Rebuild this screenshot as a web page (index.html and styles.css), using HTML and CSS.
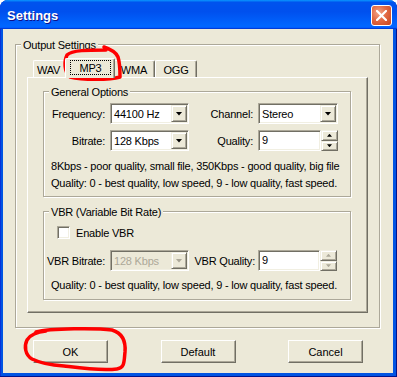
FILE: index.html
```html
<!DOCTYPE html>
<html lang="en">
<head>
    <meta charset="UTF-8">
    <title>Settings</title>
    <link rel="stylesheet" href="styles.css">
</head>
<body>
    <div class="window">
        <div class="titlebar">
            <span class="title">Settings</span>
            <button class="close" aria-label="Close">
                <svg width="11" height="11" viewBox="0 0 11 11"><path d="M1 1L10 10M10 1L1 10" stroke="#fff" stroke-width="2.2" stroke-linecap="square"/></svg>
            </button>
        </div>
        <div class="client">
            <div class="group outer">
                <span class="group-title">Output Settings</span>
                <div class="tabs">
                    <div class="tab tab-wav">WAV</div>
                    <div class="tab active"><span class="focus">MP3</span></div>
                    <div class="tab">WMA</div>
                    <div class="tab">OGG</div>
                </div>
                <div class="panel">
                    <div class="group general">
                        <span class="group-title">General Options</span>
                        <div class="row">
                            <span class="label lbl-a">Frequency:</span>
                            <div class="combo"><span>44100 Hz</span><i class="arrow"></i></div>
                            <span class="label lbl-b">Channel:</span>
                            <div class="combo wide"><span>Stereo</span><i class="arrow"></i></div>
                        </div>
                        <div class="row">
                            <span class="label lbl-a">Bitrate:</span>
                            <div class="combo"><span>128 Kbps</span><i class="arrow"></i></div>
                            <span class="label lbl-b">Quality:</span>
                            <div class="edit">9</div>
                            <div class="spin"><i class="spin-btn up"></i><i class="spin-btn down"></i></div>
                        </div>
                        <p class="note">8Kbps - poor quality, small file, 350Kbps - good quality, big file<br>Quality: 0 - best quality, low speed, 9 - low quality, fast speed.</p>
                    </div>
                    <div class="group vbr">
                        <span class="group-title">VBR (Variable Bit Rate)</span>
                        <div class="check-row">
                            <i class="checkbox"></i>
                            <span>Enable VBR</span>
                        </div>
                        <div class="row">
                            <span class="label lbl-c">VBR Bitrate:</span>
                            <div class="combo disabled"><span>128 Kbps</span><i class="arrow"></i></div>
                            <span class="label lbl-d">VBR Quality:</span>
                            <div class="edit short">9</div>
                            <div class="spin disabled"><i class="spin-btn up"></i><i class="spin-btn down"></i></div>
                        </div>
                        <p class="note">Quality: 0 - best quality, low speed, 9 - low quality, fast speed.</p>
                    </div>
                </div>
            </div>
            <div class="buttons">
                <button class="btn">OK</button>
                <button class="btn">Default</button>
                <button class="btn">Cancel</button>
            </div>
        </div>
        <!-- red hand-drawn marks over the screenshot -->
        <svg class="marks" width="397" height="377" viewBox="0 0 397 377">
            <path d="M104 47C110 49 116 52 118 57C120 63 120 71 120 77C110 80 82 80 70 77C64 72 64 61 67 55C72 50 88 50 106 50" />
            <path d="M36 332C50 328 98 328 112 330C122 333 126 340 125 352C124 361 125 368 117 369C100 371 80 368 64 366C50 365 38 362 32 359C25 355 24 346 27 340C30 335 35 332 46 331" />
        </svg>
    </div>
</body>
</html>
```

FILE: styles.css
```css
* {
    box-sizing: border-box;
}
body {
    margin: 0;
    background: #fff;
    font-family: "Liberation Sans", Arial, sans-serif;
    font-size: 11px;
    letter-spacing: -0.2px;
    color: #000;
}
.window {
    position: relative;
    width: 397px;
    height: 377px;
    display: flex;
    flex-direction: column;
    background: #0054e3;
    border-radius: 8px 8px 0 0;
    overflow: hidden;
    box-shadow: inset -1px -1px #00138c, inset 1px 0 #0831d9;
}
.titlebar {
    flex: none;
    height: 29px;
    display: flex;
    align-items: center;
    justify-content: space-between;
    padding: 2px 5px 0 7px;
    background: linear-gradient(#0997ff, #0053ee 8%, #0050ee 40%, #0066ff 88%, #0066ff 93%, #005bff 95%, #003dd7 96%, #003dd7);
}
.title {
    color: #fff;
    font-weight: bold;
    font-size: 13px;
    letter-spacing: 0;
    text-shadow: 1px 1px #0f1089;
}
.close {
    width: 21px;
    height: 21px;
    padding: 0;
    border: 1px solid #fff;
    border-radius: 3px;
    display: flex;
    align-items: center;
    justify-content: center;
    background: radial-gradient(circle at 35% 35%, #f2a589, #e26a44 45%, #c7431c);
}
.client {
    flex: 1;
    margin: 0 4px 4px 3px;
    padding: 15px 13px 10px 12px;
    background: #ece9d8;
}
.group {
    position: relative;
    border: 1px solid #aca899;
    box-shadow: inset 1px 1px #fff, 1px 1px #fff;
}
.group-title {
    position: absolute;
    top: -6px;
    left: 5px;
    padding: 0 2px;
    line-height: 13px;
    background: #ece9d8;
}
.outer {
    padding: 13px 11px 14px;
}
.tabs {
    display: flex;
    align-items: flex-end;
    height: 19px;
    padding-left: 6px;
}
.tab {
    width: 42px;
    height: 17px;
    display: flex;
    align-items: center;
    justify-content: center;
    padding-top: 1px;
    background: #ece9d8;
    border: 1px solid #fff;
    border-right-color: #716f64;
    border-bottom: 0;
    border-radius: 2px 2px 0 0;
    box-shadow: inset -1px 0 #aca899;
}
.tab-wav {
    width: 34px;
    padding-right: 3px;
}
.tab.active {
    width: 50px;
    height: 20px;
    margin: 0 -2px -1px;
    padding: 1px 3px 3px 4px;
    z-index: 1;
}
.focus {
    flex: 1;
    height: 15px;
    display: flex;
    align-items: center;
    justify-content: center;
    border: 1px dotted #000;
}
.panel {
    padding: 13px 16px 12px 15px;
    border: 1px solid;
    border-color: #fff #716f64 #716f64 #fff;
    box-shadow: inset -1px -1px #aca899;
}
.general {
    margin-bottom: 14px;
    padding: 11px 0 4px 7px;
}
.vbr {
    padding: 14px 0 5px 7px;
}
.row {
    display: flex;
    align-items: center;
    height: 21px;
}
.row + .row {
    margin-top: 6px;
}
.label {
    flex: none;
    margin-right: 5px;
    text-align: right;
    white-space: nowrap;
}
.lbl-a {
    width: 54px;
}
.lbl-b {
    width: 64px;
}
.lbl-c {
    width: 59px;
}
.lbl-d {
    width: 66px;
    margin-right: 3px;
}
.combo, .edit, .checkbox {
    flex: none;
    background: #fff;
    border: 1px solid;
    border-color: #aca899 #fff #fff #aca899;
    box-shadow: inset 1px 1px #716f64, inset -1px -1px #f1efe2;
}
.combo {
    width: 79px;
    height: 21px;
    padding: 1px;
    display: flex;
    align-items: center;
}
.combo.wide {
    width: 80px;
}
.combo span {
    flex: 1;
    padding-left: 2px;
}
.arrow, .spin-btn {
    display: flex;
    align-items: center;
    justify-content: center;
    background: #ece9d8;
    border: 1px solid;
    border-color: #f1efe2 #716f64 #716f64 #f1efe2;
    box-shadow: inset 1px 1px #fff, inset -1px -1px #aca899;
}
.arrow {
    width: 16px;
    height: 17px;
}
.arrow::after {
    content: "";
    width: 7px;
    height: 4px;
    background: #000;
    clip-path: polygon(0 0, 100% 0, 50% 100%);
}
.edit {
    width: 63px;
    height: 21px;
    padding: 2px 3px;
    line-height: 15px;
}
.edit.short {
    width: 62px;
}
.spin {
    flex: none;
    width: 17px;
    height: 21px;
    display: flex;
    flex-direction: column;
}
.spin-btn {
    flex: 1;
}
.spin-btn::after {
    content: "";
    width: 5px;
    height: 3px;
    background: #000;
}
.up::after {
    clip-path: polygon(50% 0, 100% 100%, 0 100%);
}
.down::after {
    clip-path: polygon(0 0, 100% 0, 50% 100%);
}
.disabled.combo {
    background: #ece9d8;
    color: #aca899;
}
.disabled .arrow::after, .disabled .spin-btn::after {
    background: #aca899;
}
.note {
    margin: 7px 0 0;
    line-height: 17px;
}
.vbr .note {
    margin-top: 6px;
}
.vbr .row {
    margin-top: 11px;
    margin-left: -5px;
}
.check-row {
    display: flex;
    align-items: center;
    height: 13px;
    padding-left: 6px;
}
.checkbox {
    width: 13px;
    height: 13px;
    margin-right: 6px;
}
.buttons {
    display: flex;
    justify-content: space-between;
    margin-top: 12px;
    padding: 0 17px 0 18px;
}
.btn {
    width: 75px;
    height: 23px;
    padding: 0;
    font: inherit;
    color: #000;
    background: #ece9d8;
    border: 1px solid;
    border-color: #fff #716f64 #716f64 #fff;
    box-shadow: inset -1px -1px #aca899;
}
.marks {
    position: absolute;
    top: 0;
    left: 0;
    pointer-events: none;
}
.marks path {
    fill: none;
    stroke: #f00;
    stroke-width: 3.5;
    stroke-linecap: round;
    stroke-linejoin: round;
}
```
